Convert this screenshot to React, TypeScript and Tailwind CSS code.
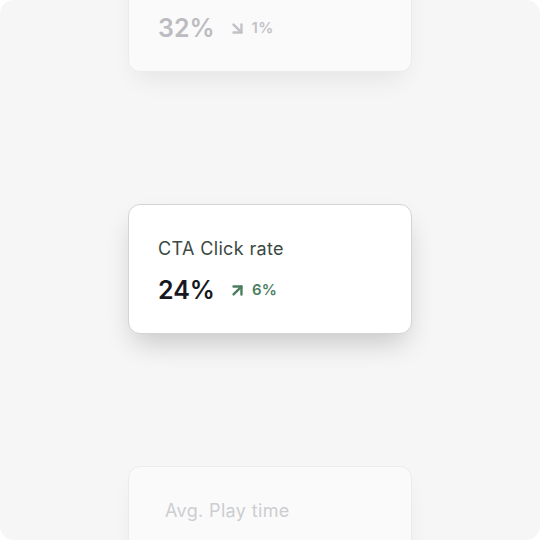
import { ArrowDownRight, ArrowUpRight } from "lucide-react";

type Stat = {
  title: string;
  value: string;
  delta: string;
  up: boolean;
  active: boolean;
  pad: string;
};

const stats: Stat[] = [
  { title: "Email open rate", value: "32%", delta: "1%", up: false, active: false, pad: "pl-[29px]" },
  { title: "CTA Click rate", value: "24%", delta: "6%", up: true, active: true, pad: "pl-[29px]" },
  { title: "Avg. Play time", value: "3m 12s", delta: "4%", up: true, active: false, pad: "pl-[36px]" },
];

function StatCard({ s }: { s: Stat }) {
  const a = s.active;
  return (
    <div
      className={`w-[284px] h-[130px] shrink-0 rounded-xl border pr-[29px] pt-[32px] ${s.pad} ${
        a
          ? "bg-white border-[#d4d4d8] shadow-[0_14px_28px_-6px_rgba(0,0,0,0.2)]"
          : "bg-[#fafafb] border-[#ececee] shadow-[0_14px_26px_-8px_rgba(0,0,0,0.08)]"
      }`}
    >
      <p
        className={`text-[18px] leading-6 tracking-[0.02em] ${
          a ? "text-[#3b4942]" : "text-[#cdcdd1]"
        }`}
      >
        {s.title}
      </p>
      <div className="flex items-center mt-[15px]">
        <span
          className={`text-[25px] leading-7 font-semibold ${
            a ? "text-[#17191f]" : "text-[#bcbcc0]"
          }`}
        >
          {s.value}
        </span>
        <span
          className={`flex items-center ml-[13px] text-[15px] font-semibold ${
            a ? "text-[#4b7d5e]" : "text-[#c2c2c6]"
          }`}
        >
          {s.up ? (
            <ArrowUpRight size={19} strokeWidth={3} />
          ) : (
            <ArrowDownRight size={19} strokeWidth={3} />
          )}
          <span className="ml-[5px] tracking-[0.02em]">{s.delta}</span>
        </span>
      </div>
    </div>
  );
}

export default function App() {
  return (
    <div
      className="w-[540px] h-[540px] bg-white"
      style={{ fontFamily: "Inter, 'Noto Sans', sans-serif" }}
    >
      <div className="w-full h-full rounded-[14px] bg-[#f6f6f7] overflow-hidden flex flex-col items-center">
        <div className="flex flex-col items-center gap-[132px] mt-[-58px]">
          {stats.map((s) => (
            <StatCard key={s.title} s={s} />
          ))}
        </div>
      </div>
    </div>
  );
}
